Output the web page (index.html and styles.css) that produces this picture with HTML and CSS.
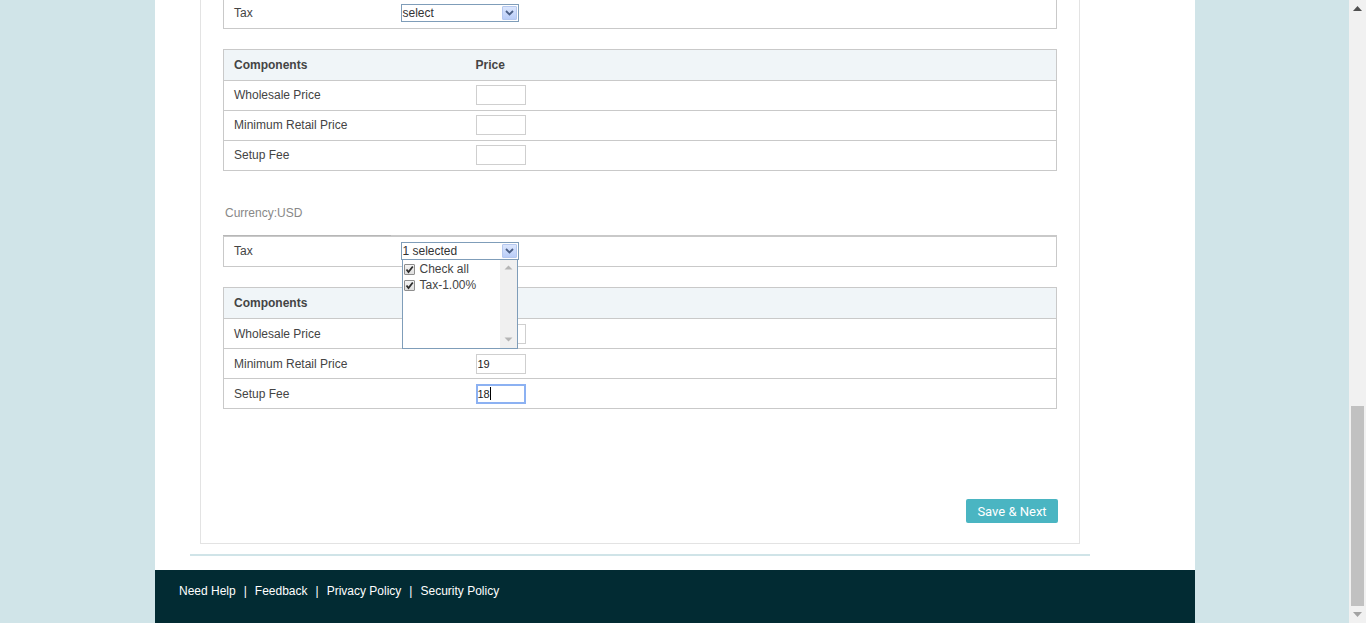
FILE: index.html
```html
<!DOCTYPE html>
<html>
<head>
<meta charset="utf-8">
<link rel="stylesheet" href="styles.css">
</head>
<body>
<div class="viewport">
  <div class="page">
    <div class="wrap">
      <div class="panel">
        <table class="tbl tax first">
          <tr><td class="lbl">Tax</td><td><div class="sel"><span class="sel-text">select</span><span class="sel-btn"><svg width="9" height="6" viewBox="0 0 9 6"><path d="M1 1 L4.5 4.5 L8 1" fill="none" stroke="#4a5f86" stroke-width="1.8"/></svg></span></div></td></tr>
        </table>
        <table class="tbl comp">
          <tr class="head"><th class="lbl">Components</th><th>Price</th></tr>
          <tr><td class="lbl">Wholesale Price</td><td><input class="inp" type="text"></td></tr>
          <tr><td class="lbl">Minimum Retail Price</td><td><input class="inp" type="text"></td></tr>
          <tr><td class="lbl">Setup Fee</td><td><input class="inp" type="text"></td></tr>
        </table>
        <div class="currency">Currency:USD</div>
        <div class="tax2-wrap">
          <div class="topmark"></div>
          <table class="tbl tax">
            <tr><td class="lbl">Tax</td><td><div class="sel-holder"><div class="sel"><span class="sel-text">1 selected</span><span class="sel-btn"><svg width="9" height="6" viewBox="0 0 9 6"><path d="M1 1 L4.5 4.5 L8 1" fill="none" stroke="#4a5f86" stroke-width="1.8"/></svg></span></div>
              <div class="dropdown">
                <div class="dd-items">
                  <div class="dd-item"><span class="cb"><svg width="9" height="9" viewBox="0 0 9 9"><path d="M1.5 4.5 L3.5 7 L7.8 1.5" fill="none" stroke="#2e2e2e" stroke-width="1.8"/></svg></span>Check all</div>
                  <div class="dd-item"><span class="cb"><svg width="9" height="9" viewBox="0 0 9 9"><path d="M1.5 4.5 L3.5 7 L7.8 1.5" fill="none" stroke="#2e2e2e" stroke-width="1.8"/></svg></span>Tax-1.00%</div>
                </div>
                <div class="dd-scroll">
                  <svg width="9" height="5" viewBox="0 0 9 5"><path d="M0.5 4.5 L4.5 0.5 L8.5 4.5 Z" fill="#b5b5b5"/></svg>
                  <svg width="9" height="5" viewBox="0 0 9 5"><path d="M0.5 0.5 L4.5 4.5 L8.5 0.5 Z" fill="#b5b5b5"/></svg>
                </div>
              </div></div></td></tr>
          </table>
        </div>
        <table class="tbl comp">
          <tr class="head"><th class="lbl">Components</th><th></th></tr>
          <tr><td class="lbl">Wholesale Price</td><td><input class="inp" type="text"></td></tr>
          <tr><td class="lbl">Minimum Retail Price</td><td><input class="inp" type="text" value="19"></td></tr>
          <tr><td class="lbl">Setup Fee</td><td><div class="inp focus">18<span class="caret"></span></div></td></tr>
        </table>
        <div class="actions"><button class="btn">Save &amp; Next</button></div>
      </div>
      <div class="rule"></div>
      <div class="footer">
        <a>Need Help</a><span class="sep">|</span><a>Feedback</a><span class="sep">|</span><a>Privacy Policy</a><span class="sep">|</span><a>Security Policy</a>
      </div>
    </div>
  </div>
  <div class="scrollbar">
    <div class="sb-arrow"><svg width="9" height="5" viewBox="0 0 9 5"><path d="M0 5 L4.5 0 L9 5 Z" fill="#505050"/></svg></div>
    <div class="sb-track"><div class="sb-thumb"></div></div>
    <div class="sb-arrow"><svg width="9" height="5" viewBox="0 0 9 5"><path d="M0 0 L4.5 5 L9 0 Z" fill="#a3a3a3"/></svg></div>
  </div>
</div>
</body>
</html>
```

FILE: styles.css
```css
* { box-sizing: border-box; }
html, body { margin: 0; padding: 0; }
body {
  font-family: "Liberation Sans", Arial, sans-serif;
  font-size: 12px;
  color: #444;
  background: #d0e4e8;
  overflow: hidden;
}
.viewport {
  display: flex;
  width: 1366px;
  height: 623px;
  overflow: hidden;
}
.page {
  flex: 1;
  display: flex;
  padding-left: 155px;
  justify-content: flex-start;
}
.wrap {
  width: 1040px;
  height: 623px;
  background: #fff;
  display: flex;
  flex-direction: column;
}
.panel {
  margin-left: 45px;
  width: 880px;
  border-left: 1px solid #e3e3e3;
  border-right: 1px solid #e3e3e3;
  border-bottom: 1px solid #e3e3e3;
  padding: 0 22px 20px 22px;
}
.tbl {
  width: 834px;
  border-collapse: collapse;
  border: 1px solid #c9c9c9;
}
.tbl td, .tbl th {
  padding: 0;
  text-align: left;
  vertical-align: middle;
}
.tbl .lbl {
  width: 252px;
  padding-left: 10px;
}
.tax td { height: 30px; }
.tax.first { border-top: none; }
.tax.first td { height: 28px; padding-bottom: 2px; }
.tax .lbl { width: 177px; }
.comp { margin-top: 20px; }
.comp tr { border-top: 1px solid #c9c9c9; }
.comp td { height: 30px; }
.comp th {
  height: 31px;
  background: #f0f5f8;
  font-weight: bold;
  color: #444;
}
.sel-holder { position: relative; width: 118px; }
.sel {
  width: 118px;
  height: 18px;
  border: 1px solid #7f9db9;
  display: flex;
  align-items: center;
  justify-content: space-between;
  background: #fff;
  font-size: 12px;
  color: #333;
  padding-left: 1px;
}
.sel-text { line-height: 16px; }
.sel-btn {
  width: 15px;
  height: 14px;
  margin-right: 1px;
  background: linear-gradient(#dbe6fd, #b9cdf8);
  border: 1px solid #b5c8ef;
  border-radius: 1px;
  display: flex;
  align-items: center;
  justify-content: center;
}
.dropdown {
  position: absolute;
  left: 1px;
  top: 17px;
  width: 116px;
  height: 90px;
  background: #fff;
  border: 1px solid #7f9db9;
  display: flex;
  z-index: 5;
}
.dd-items { flex: 1; padding-top: 1px; }
.dd-item {
  display: flex;
  align-items: center;
  height: 16px;
  padding-left: 1px;
  font-size: 12px;
  color: #444;
}
.cb {
  width: 11px;
  height: 11px;
  border: 1px solid #8e8e8e;
  background: linear-gradient(#f4f4f4, #dedede);
  margin-right: 5px;
  display: flex;
  align-items: center;
  justify-content: center;
  border-radius: 1px;
}
.dd-scroll {
  width: 17px;
  background: #f0f0f0;
  display: flex;
  flex-direction: column;
  justify-content: space-between;
  align-items: center;
  padding: 5px 0 6px;
}
.inp {
  display: block;
  width: 50px;
  height: 20px;
  border: 1px solid #cfcfcf;
  padding: 0 0 0 1px;
  font-family: "Liberation Sans", Arial, sans-serif;
  font-size: 11px;
  color: #222;
  outline: none;
  background: #fff;
}
.inp.focus {
  border: 2px solid #8cb1f2;
  display: flex;
  align-items: center;
  padding-left: 0;
}
.caret {
  display: inline-block;
  width: 1px;
  height: 13px;
  background: #000;
}
.currency {
  margin-top: 35px;
  height: 14px;
  line-height: 14px;
  color: #888;
  padding-left: 2px;
}
.tax2-wrap { margin-top: 15px; }
.topmark {
  height: 0;
  width: 168px;
  border-top: 1px solid #b7b7b7;
  margin-bottom: -1px;
  position: relative;
  z-index: 1;
}
.topmark + .tbl { border-top: 2px solid #c9c9c9; }
.topmark + .tbl td { height: 31px; }
.actions {
  display: flex;
  justify-content: flex-end;
  margin-top: 90px;
  margin-right: -1px;
}
.btn {
  width: 92px;
  height: 24px;
  background: #4ab5c2;
  border: none;
  border-radius: 2px;
  color: #fff;
  font-family: Roboto, "Liberation Sans", sans-serif;
  font-size: 13px;
  padding: 0;
}
.rule {
  margin: 10px 0 0 35px;
  width: 900px;
  height: 2px;
  background: #d0e4e8;
}
.footer {
  margin-top: 14px;
  flex: 1;
  background: #022b33;
  display: flex;
  align-items: flex-start;
  padding: 14px 0 0 24px;
  color: #fff;
  font-size: 12px;
}
.footer a { color: #fff; }
.sep { margin: 0 8px; }
.scrollbar {
  width: 17px;
  background: #f1f1f1;
  display: flex;
  flex-direction: column;
}
.sb-arrow {
  height: 17px;
  display: flex;
  align-items: center;
  justify-content: center;
}
.sb-track {
  flex: 1;
  display: flex;
  flex-direction: column;
  justify-content: flex-end;
  padding: 0 2px;
}
.sb-thumb {
  height: 200px;
  background: #c1c1c1;
}
```
